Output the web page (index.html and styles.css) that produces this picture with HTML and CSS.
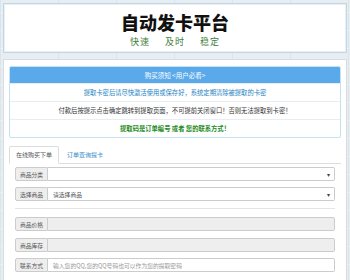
FILE: index.html
```html
<!DOCTYPE html>
<html lang="zh-CN">
<head>
<meta charset="utf-8">
<title>自动发卡平台</title>
<link rel="stylesheet" href="styles.css">
</head>
<body>
<div class="page">
  <header class="header-panel">
    <h1 class="title">自动发卡平台</h1>
    <div class="slogan"><span>快速</span><span>及时</span><span>稳定</span></div>
  </header>
  <main class="main-panel">
    <section class="notice">
      <div class="notice-head">购买须知 &lt;用户必看&gt;</div>
      <div class="notice-row blue">提取卡密后请尽快激活使用或保存好，系统定期清除被提取的卡密</div>
      <div class="notice-row dark">付款后按提示点击确定跳转到提取页面，不可提前关闭窗口！否则无法提取到卡密！</div>
      <div class="notice-row green">提取码是订单编号 或者 您的联系方式！</div>
    </section>
    <nav class="tabs">
      <div class="tab active">在线购买下单</div>
      <div class="tab link">订单查询提卡</div>
    </nav>
    <div class="tab-body">
      <div class="igroup"><span class="addon">商品分类</span><div class="ctrl select"><span class="val"></span><span class="caret">▾</span></div></div>
      <div class="igroup"><span class="addon">选择商品</span><div class="ctrl select"><span class="val">请选择商品</span><span class="caret">▾</span></div></div>
      <div class="sep"></div>
      <div class="igroup"><span class="addon">商品价格</span><div class="ctrl disabled"></div></div>
      <div class="igroup"><span class="addon">商品库存</span><div class="ctrl disabled"></div></div>
      <div class="igroup"><span class="addon">联系方式</span><div class="ctrl"><span class="ph">输入您的QQ,您的QQ号码也可以作为您的提取密码</span></div></div>
    </div>
  </main>
</div>
</body>
</html>
```

FILE: styles.css
```css
html, body {
  margin: 0;
  padding: 0;
}
body {
  background-color: #e7edf0;
  background-image:
    repeating-linear-gradient(0deg, rgba(255,255,255,0.35) 0 1px, transparent 1px 18px),
    repeating-linear-gradient(90deg, rgba(200,212,220,0.35) 0 1px, transparent 1px 58px);
  font-family: "Noto Sans CJK SC", "Noto Sans", sans-serif;
  color: #333;
}
.page {
  display: flex;
  flex-direction: column;
  gap: 6px;
  padding: 3px 3px 0 3px;
}
.header-panel {
  height: 48px;
  box-sizing: content-box;
  background: #fff;
  border: 1px solid #bfd7e6;
  box-shadow: inset 0 0 0 1px #e6f0f6;
  display: flex;
  flex-direction: column;
  align-items: center;
}
.title {
  margin: 4.5px 0 0 0;
  font-size: 18px;
  line-height: 26px;
  font-weight: 900;
  color: #111;
}
.slogan {
  display: flex;
  gap: 15px;
  margin-top: 0;
  font-size: 9px;
  line-height: 13px;
  color: #3f8040;
  letter-spacing: 1px;
}
.main-panel {
  background: #fff;
  border: 1px solid #d3dde3;
  padding: 6px 5px 0 5px;
  height: 216px;
  overflow: hidden;
}
.notice {
  border: 1px solid #c4e2f1;
  border-radius: 2px;
  overflow: hidden;
}
.notice-head {
  background: #5aa9ea;
  color: #fff;
  font-size: 6.5px;
  height: 16px;
  line-height: 16px;
  text-align: center;
}
.notice-row {
  font-size: 6.3px;
  height: 17px;
  line-height: 17px;
  text-align: center;
  border-top: 1px solid #e6eef2;
}
.notice-row.blue { color: #2684c2; }
.notice-row.dark { color: #333; }
.notice-row.green { color: #228a22; font-weight: bold; }
.tabs {
  display: flex;
  margin-top: 8px;
  border-bottom: 1px solid #dddddd;
  height: 17px;
}
.tab {
  font-size: 6px;
  line-height: 16px;
  padding: 0 6px;
  margin-bottom: -1px;
  border: 1px solid transparent;
  border-radius: 2px 2px 0 0;
}
.tab.active {
  border-color: #dddddd;
  border-bottom-color: #fff;
  background: #fff;
  color: #555;
}
.tab.link {
  color: #3b8bc9;
  margin-left: 1px;
}
.tab-body {
  padding: 3px 6px 0 6px;
  display: flex;
  flex-direction: column;
}
.igroup {
  display: flex;
  height: 14px;
  margin-bottom: 6px;
  font-size: 5.8px;
}
.addon {
  width: 33px;
  flex: none;
  background: #eeeeee;
  border: 1px solid #cccccc;
  border-radius: 2px 0 0 2px;
  color: #555;
  display: flex;
  align-items: center;
  justify-content: center;
  box-sizing: border-box;
}
.ctrl {
  flex: 1;
  border: 1px solid #cccccc;
  border-left: none;
  border-radius: 0 2px 2px 0;
  display: flex;
  align-items: center;
  padding: 0 5px;
  box-sizing: border-box;
  color: #555;
  background: #fff;
}
.ctrl.disabled {
  background: #eeeeee;
}
.select .val { flex: 1; }
.caret {
  font-size: 6px;
  color: #444;
  margin-right: -1px;
}
.ph {
  color: #999;
}
.sep {
  border-top: 1px solid #e5e5e5;
  margin: 1px 0 8px 0;
}
.igroup + .sep + .igroup { margin-bottom: 7px; }
```
